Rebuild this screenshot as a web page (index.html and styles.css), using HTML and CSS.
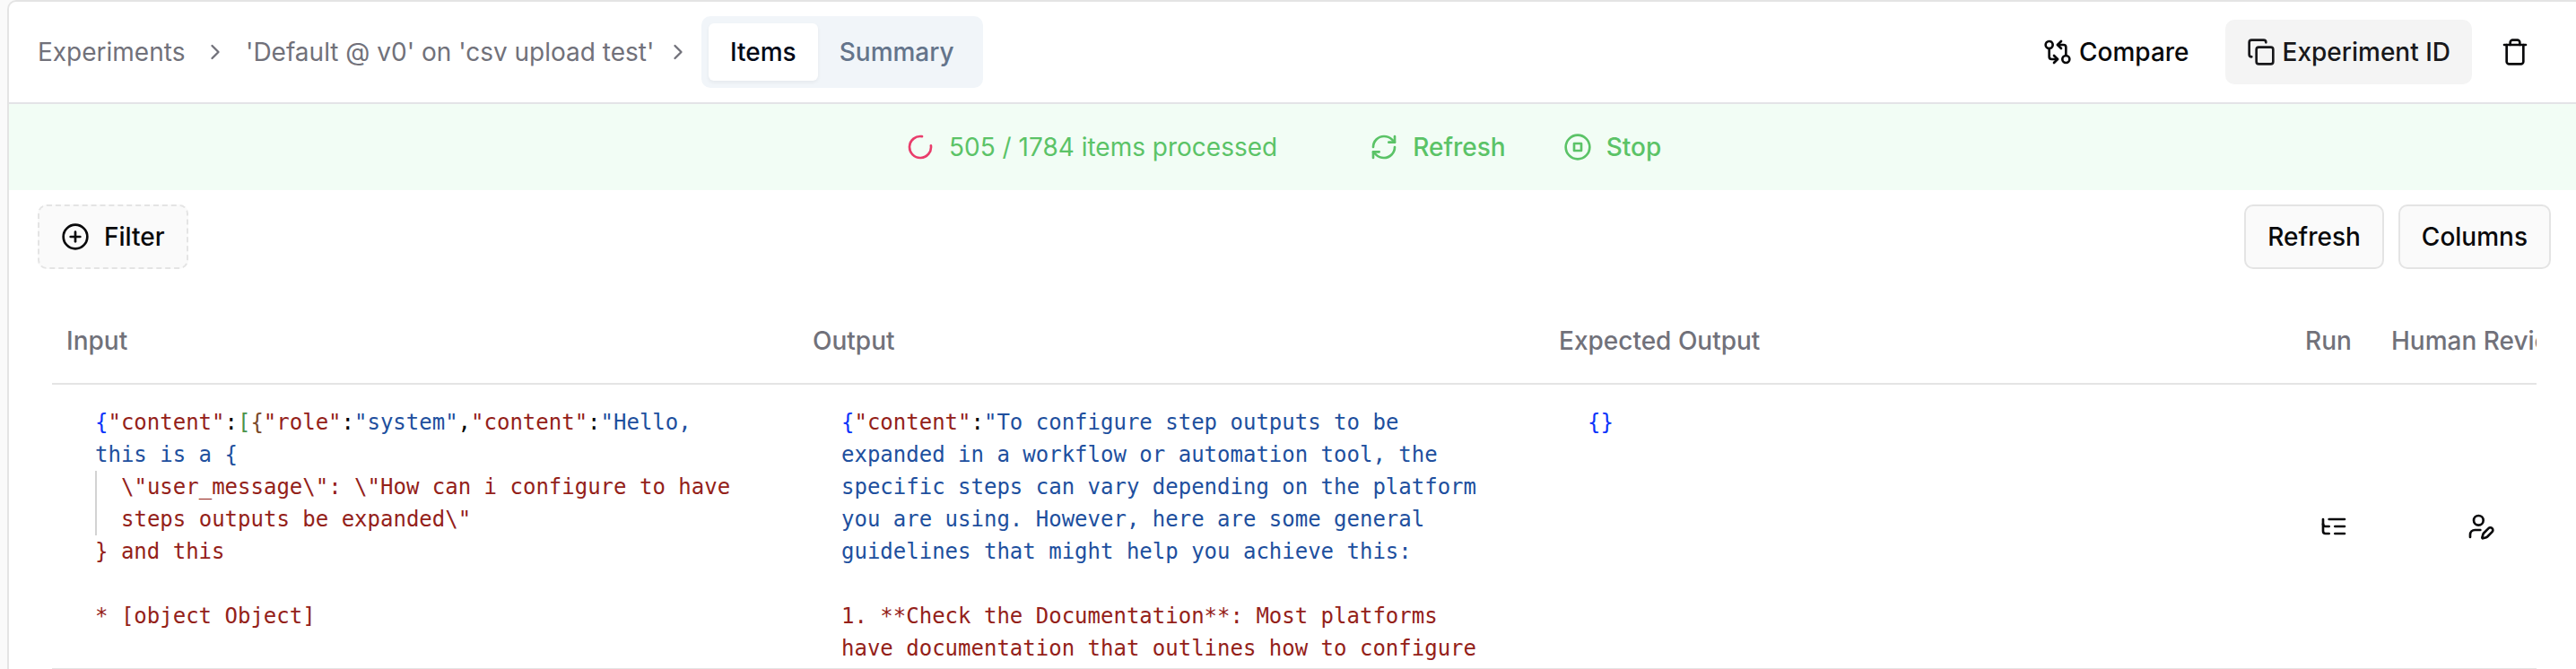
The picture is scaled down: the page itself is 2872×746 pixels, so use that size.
FILE: index.html
```html
<!DOCTYPE html>
<html lang="en">
<head>
<meta charset="utf-8">
<title>Experiment items</title>
<link rel="stylesheet" href="styles.css">
</head>
<body>
<main class="panel">
  <header class="header">
    <nav class="crumbs">
      <span class="crumb crumb-root">Experiments</span>
      <svg class="icon chevron" viewBox="0 0 24 24"><path d="m9 18 6-6-6-6"/></svg>
      <span class="crumb crumb-name">'Default @ v0' on 'csv upload test'</span>
      <svg class="icon chevron" viewBox="0 0 24 24"><path d="m9 18 6-6-6-6"/></svg>
      <div class="tabs">
        <button class="tab tab-active">Items</button>
        <button class="tab">Summary</button>
      </div>
    </nav>
    <div class="actions">
      <button class="action compare">
        <svg class="icon" viewBox="0 0 24 24"><circle cx="5" cy="6" r="3"/><path d="M12 6h5a2 2 0 0 1 2 2v7"/><path d="m15 9-3-3 3-3"/><circle cx="19" cy="18" r="3"/><path d="M12 18H7a2 2 0 0 1-2-2V9"/><path d="m9 15 3 3-3 3"/></svg>
        Compare
      </button>
      <button class="action copy-id">
        <svg class="icon" viewBox="0 0 24 24"><rect width="14" height="14" x="8" y="8" rx="2"/><path d="M4 16c-1.1 0-2-.9-2-2V4c0-1.1.9-2 2-2h10c1.1 0 2 .9 2 2"/></svg>
        Experiment ID
      </button>
      <button class="action trash">
        <svg class="icon" viewBox="0 0 24 24"><path d="M3 6h18"/><path d="M19 6v14c0 1-1 2-2 2H7c-1 0-2-1-2-2V6"/><path d="M8 6V4c0-1 1-2 2-2h4c1 0 2 1 2 2v2"/></svg>
      </button>
    </div>
  </header>

  <section class="banner">
    <div class="progress">
      <svg class="icon spinner" viewBox="0 0 24 24"><path d="M21 12a9 9 0 1 1-6.219-8.56"/></svg>
      <span>505 / 1784 items processed</span>
    </div>
    <button class="banner-button banner-refresh">
      <svg class="icon" viewBox="0 0 24 24"><path d="M3 12a9 9 0 0 1 9-9 9.75 9.75 0 0 1 6.74 2.74L21 8"/><path d="M21 3v5h-5"/><path d="M21 12a9 9 0 0 1-9 9 9.75 9.75 0 0 1-6.74-2.74L3 16"/><path d="M8 16H3v5"/></svg>
      Refresh
    </button>
    <button class="banner-button banner-stop">
      <svg class="icon" viewBox="0 0 24 24"><circle cx="12" cy="12" r="10"/><rect width="6" height="6" x="9" y="9"/></svg>
      Stop
    </button>
  </section>

  <div class="toolbar">
    <button class="button button-filter">
      <svg class="icon" viewBox="0 0 24 24"><circle cx="12" cy="12" r="10"/><path d="M8 12h8"/><path d="M12 8v8"/></svg>
      Filter
    </button>
    <div class="toolbar-right">
      <button class="button">Refresh</button>
      <button class="button">Columns</button>
    </div>
  </div>

  <div class="table">
    <div class="row head">
      <div class="cell">Input</div>
      <div class="cell">Output</div>
      <div class="cell">Expected Output</div>
      <div class="cell">Run</div>
      <div class="cell">Human Review</div>
    </div>
    <div class="row body-row">
      <div class="cell code">
        <div><span class="b1">{</span><span class="key">"content"</span>:<span class="b2">[</span><span class="b3">{</span><span class="key">"role"</span>:<span class="val">"system"</span>,<span class="key">"content"</span>:<span class="val">"Hello,</span></div>
        <div class="val">this is a {</div>
        <div class="key indent">\"user_message\": \"How can i configure to have<br>steps outputs be expanded\"</div>
        <div class="key">} and this</div>
        <div><br></div>
        <div class="key">* [object Object]</div>
      </div>
      <div class="cell code">
        <div><span class="b1">{</span><span class="key">"content"</span>:<span class="val">"To configure step outputs to be</span></div>
        <div class="val">expanded in a workflow or automation tool, the</div>
        <div class="val">specific steps can vary depending on the platform</div>
        <div class="val">you are using. However, here are some general</div>
        <div class="val">guidelines that might help you achieve this:</div>
        <div><br></div>
        <div class="key">1. **Check the Documentation**: Most platforms</div>
        <div class="key">have documentation that outlines how to configure</div>
      </div>
      <div class="cell code"><div class="b1">{}</div></div>
      <div class="cell center">
        <svg class="icon" viewBox="0 0 24 24"><path d="M21 12h-8"/><path d="M21 6H8"/><path d="M21 18h-8"/><path d="M3 6v4c0 1.1.9 2 2 2h3"/><path d="M3 10v6c0 1.1.9 2 2 2h3"/></svg>
      </div>
      <div class="cell center">
        <svg class="icon" viewBox="0 0 24 24"><path d="M11.5 15H7a4 4 0 0 0-4 4v2"/><path d="M21.378 16.626a1 1 0 0 0-3.004-3.004l-4.01 4.012a2 2 0 0 0-.506.854l-.837 2.87a.5.5 0 0 0 .62.62l2.87-.837a2 2 0 0 0 .854-.506z"/><circle cx="10" cy="7" r="4"/></svg>
      </div>
    </div>
  </div>
</main>
</body>
</html>
```
FILE: styles.css
```css
* { box-sizing: border-box; }

body {
  margin: 0;
  padding-left: 8px;
  height: 746px;
  overflow: hidden;
  background: #fafafa;
  color: #09090b;
  font: 500 28px/40px Inter, sans-serif;
}

button {
  font: inherit;
  color: inherit;
  background: none;
  border: 0;
  padding: 0;
  display: flex;
  align-items: center;
  white-space: nowrap;
}

.icon {
  width: 32px;
  height: 32px;
  flex: none;
  fill: none;
  stroke: currentColor;
  stroke-width: 2;
  stroke-linecap: round;
  stroke-linejoin: round;
}

.panel {
  height: 746px;
  overflow: hidden;
  background: #fff;
  border: 2px solid #e4e4e4;
  border-width: 2px 0 0 2px;
  border-radius: 10px 0 0 0;
}

.header {
  height: 114px;
  padding: 0 52px 0 32px;
  display: flex;
  align-items: center;
  justify-content: space-between;
  border-bottom: 2px solid #e4e4e7;
}

.crumbs {
  display: flex;
  align-items: center;
  color: #71717a;
  font-weight: 400;
  white-space: nowrap;
}
.crumb-root { width: 184px; }
.crumb-name { width: 468px; }
.chevron { width: 28px; height: 28px; }
.chevron + .crumb-name { margin-left: 20px; }

.tabs {
  display: flex;
  height: 80px;
  margin-left: 12px;
  padding: 8px;
  background: #f1f5f9;
  border-radius: 10px;
}
.tab { padding: 0 24px; font-weight: 500; color: #64748b; border-radius: 6px; }
.tab-active { color: #020817; background: #fff; box-shadow: 0 2px 4px rgba(0, 0, 0, .05); }

.actions { display: flex; align-items: center; }
.action { gap: 8px; }
.copy-id {
  height: 72px;
  margin: 0 32px 0 40px;
  padding: 0 24px;
  color: #18181b;
  background: #f4f4f4;
  border-radius: 10px;
}

.banner {
  height: 96px;
  padding-left: 1000px;
  display: flex;
  align-items: center;
  background: #f2fdf5;
  color: #5bc367;
}
.progress { display: flex; align-items: center; gap: 16px; font-weight: 400; }
.spinner { color: #e93d6b; transform: rotate(-8.5deg); }
.banner-button { gap: 16px; }
.banner-refresh { margin: 0 64px 0 103px; }

.toolbar {
  display: flex;
  justify-content: space-between;
  padding: 16px 28px 0 32px;
}
.toolbar-right { display: flex; gap: 16px; }
.button {
  height: 72px;
  padding: 0 24px;
  background: #fafafa;
  border: 2px solid #e4e4e4;
  border-radius: 10px;
}
.button-filter { gap: 16px; border-style: dashed; }

.table { margin: 32px 44px 0 48px; overflow: hidden; }
.row {
  width: 2824px;
  display: grid;
  grid-template-columns: 832px 832px 832px 96px 232px;
  border-bottom: 2px solid #e4e4e4;
}
.head { height: 97px; color: #71717a; }
.cell { padding: 28px 16px; white-space: nowrap; }
.body-row { height: 318px; }
.code {
  padding: 24px 16px 0 48px;
  color: #000;
  font: 400 24px/36px "DejaVu Sans Mono", monospace;
}
.center { display: flex; align-items: center; justify-content: center; }
.indent { padding-left: 27px; border-left: 2px solid #d3d3d3; }
.key { color: #942119; }
.val { color: #204f9e; }
.b1 { color: #0b33fa; }
.b2 { color: #4a934a; }
.b3 { color: #7b4a2a; }
```
